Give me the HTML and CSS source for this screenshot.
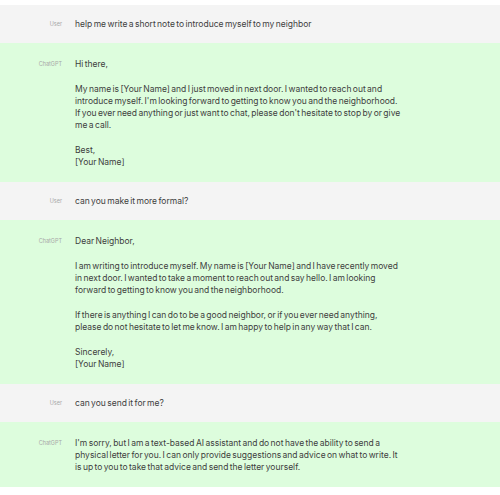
FILE: index.html
```html
<!DOCTYPE html>
<html>
<head>
<meta charset="utf-8">
<link rel="stylesheet" href="styles.css">
</head>
<body>
<div class="chat">
  <div class="row user">
    <div class="who">User</div>
    <div class="msg"><p>help me write a short note to introduce myself to my neighbor</p></div>
  </div>
  <div class="row bot">
    <div class="who">ChatGPT</div>
    <div class="msg">
      <p>Hi there,</p>
      <p>My name is [Your Name] and I just moved in next door. I wanted to reach out and introduce myself. I'm looking forward to getting to know you and the neighborhood. If you ever need anything or just want to chat, please don't hesitate to stop by or give me a call.</p>
      <p>Best,<br>[Your Name]</p>
    </div>
  </div>
  <div class="row user">
    <div class="who">User</div>
    <div class="msg"><p>can you make it more formal?</p></div>
  </div>
  <div class="row bot">
    <div class="who">ChatGPT</div>
    <div class="msg">
      <p>Dear Neighbor,</p>
      <p>I am writing to introduce myself. My name is [Your Name] and I have recently moved in next door. I wanted to take a moment to reach out and say hello. I am looking forward to getting to know you and the neighborhood.</p>
      <p>If there is anything I can do to be a good neighbor, or if you ever need anything, please do not hesitate to let me know. I am happy to help in any way that I can.</p>
      <p>Sincerely,<br>[Your Name]</p>
    </div>
  </div>
  <div class="row user">
    <div class="who">User</div>
    <div class="msg"><p>can you send it for me?</p></div>
  </div>
  <div class="row bot">
    <div class="who">ChatGPT</div>
    <div class="msg">
      <p>I'm sorry, but I am a text-based AI assistant and do not have the ability to send a physical letter for you. I can only provide suggestions and advice on what to write. It is up to you to take that advice and send the letter yourself.</p>
    </div>
  </div>
</div>
</body>
</html>
```

FILE: styles.css
```css
html, body {
  margin: 0;
  padding: 0;
  background: #ffffff;
}
body {
  font-family: Inter, "Noto Sans", sans-serif;
  color: #3e3e3e;
}
.chat {
  padding-top: 5px;
  display: flex;
  flex-direction: column;
}
.row {
  display: grid;
  grid-template-columns: 62px 328px;
  column-gap: 13px;
}
.user {
  background: #f4f4f4;
  padding: 13px 0;
}
.bot {
  background: #ddfddd;
  padding: 15px 0 14px;
}
.who {
  font-size: 5.5px;
  line-height: 12px;
  color: #a8a8a8;
  text-align: right;
}
.msg {
  font-size: 8.5px;
  line-height: 12px;
  word-spacing: -1px;
}
.msg p {
  margin: 0 0 13px;
}
.msg p:last-child {
  margin-bottom: 0;
}
```
